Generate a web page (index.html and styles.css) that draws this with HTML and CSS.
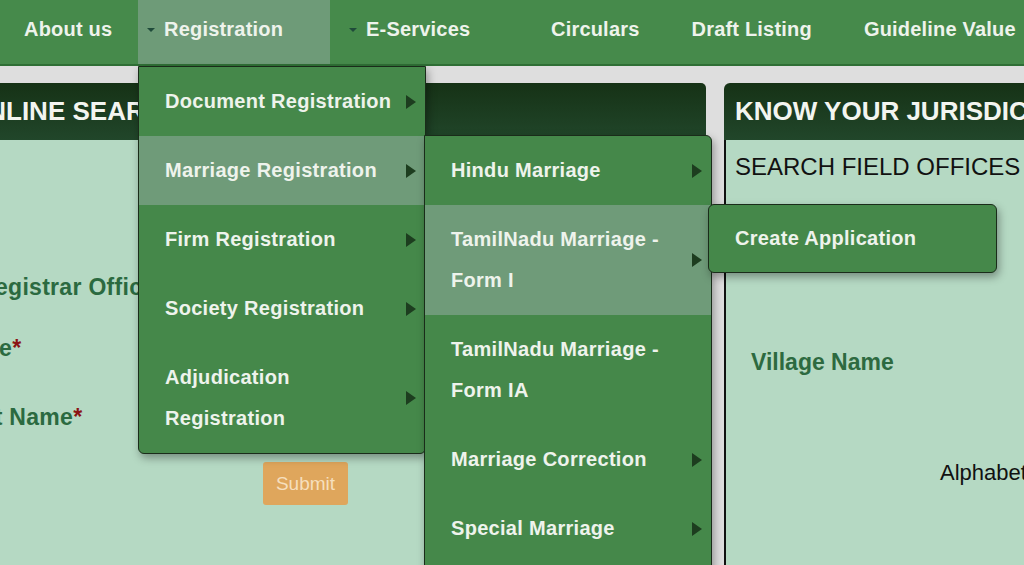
FILE: index.html
```html
<!DOCTYPE html>
<html lang="en">
<head>
<meta charset="utf-8">
<title>Registration</title>
<link rel="stylesheet" href="styles.css">
</head>
<body>
<nav class="nav">
  <ul class="nav-list">
    <li class="nav-item item-about"><span>About us</span></li>
    <li class="nav-item item-reg is-active"><span class="caret"></span><span>Registration</span>
      <ul class="menu menu-1">
        <li class="menu-item">Document Registration<span class="arrow"></span></li>
        <li class="menu-item is-active">Marriage Registration<span class="arrow"></span>
          <ul class="menu menu-2">
            <li class="menu-item">Hindu Marriage<span class="arrow"></span></li>
            <li class="menu-item is-active">TamilNadu Marriage - Form I<span class="arrow"></span>
              <ul class="menu menu-3">
                <li class="menu-item menu-item-single">Create Application</li>
              </ul>
            </li>
            <li class="menu-item">TamilNadu Marriage - Form IA</li>
            <li class="menu-item">Marriage Correction<span class="arrow"></span></li>
            <li class="menu-item">Special Marriage<span class="arrow"></span></li>
          </ul>
        </li>
        <li class="menu-item">Firm Registration<span class="arrow"></span></li>
        <li class="menu-item">Society Registration<span class="arrow"></span></li>
        <li class="menu-item">Adjudication Registration<span class="arrow"></span></li>
      </ul>
    </li>
    <li class="nav-item item-eserv"><span class="caret"></span><span>E-Services</span></li>
    <li class="nav-item"><span>Circulars</span></li>
    <li class="nav-item"><span>Draft Listing</span></li>
    <li class="nav-item"><span>Guideline Value</span></li>
  </ul>
</nav>

<main class="main">
  <section class="panel panel-left">
    <h2 class="panel-head">ONLINE SEARCH</h2>
    <div class="panel-body left-body">
      <div class="field-label">Sub Registrar Office</div>
      <div class="field-label label-2">Volume<span class="req">*</span></div>
      <div class="field-label label-3">District Name<span class="req">*</span></div>
      <button class="submit" type="button">Submit</button>
    </div>
  </section>
  <section class="panel panel-right">
    <h2 class="panel-head">KNOW YOUR JURISDICTION</h2>
    <div class="panel-body right-body">
      <div class="search-title">SEARCH FIELD OFFICES</div>
      <div class="village">Village Name</div>
      <div class="alpha">Alphabetical</div>
    </div>
  </section>
</main>
</body>
</html>
```

FILE: styles.css
```css
* {
  box-sizing: border-box;
  margin: 0;
  padding: 0;
}

html, body {
  width: 1024px;
  height: 565px;
  overflow: hidden;
}

body {
  background: #dedede;
  font-family: "Liberation Sans", Arial, sans-serif;
}

ul {
  list-style: none;
}

/* ---------- top navigation ---------- */
.nav {
  position: relative;
  z-index: 10;
  height: 66px;
  background: #468a4b;
  border-bottom: 2px solid #2f6f35;
}

.nav-list {
  display: flex;
  height: 64px;
}

.nav-item {
  position: relative;
  flex: 0 0 auto;
  display: flex;
  align-items: center;
  height: 64px;
  padding: 0 26px 6px 26px;
  color: #eef3ec;
  font-size: 20px;
  font-weight: bold;
  letter-spacing: 0.2px;
  white-space: nowrap;
}

.item-about {
  width: 138px;
  padding-left: 24px;
  padding-right: 0;
}

.item-reg {
  width: 192px;
  padding-left: 9px;
  padding-right: 0;
}

.item-reg.is-active {
  background: #6e9b78;
}

.item-eserv {
  width: 195px;
  padding-left: 19px;
  padding-right: 0;
}

.caret {
  width: 0;
  height: 0;
  margin-top: 2px;
  margin-right: 9px;
  border-left: 4px solid transparent;
  border-right: 4px solid transparent;
  border-top: 4px solid #1f4b3a;
}

/* ---------- dropdown menus ---------- */
.menu {
  position: absolute;
  width: 288px;
  background: #45884a;
  border: 1px solid #1a2c1a;
  box-shadow: 2px 4px 8px rgba(0, 0, 0, 0.35);
  letter-spacing: 0.3px;
}

.menu-1 {
  top: 66px;
  left: 0;
  border-radius: 0 0 6px 6px;
}

.menu-2 {
  top: -1px;
  left: calc(100% - 1px);
  padding-bottom: 12px;
  border-radius: 0 6px 0 0;
}

.menu-3 {
  top: -1px;
  left: calc(100% - 3px);
  width: 289px;
  border-radius: 6px;
}

.menu-item {
  position: relative;
  padding: 14px 24px 14px 26px;
  line-height: 41px;
  color: #eef3ec;
  font-size: 20px;
  font-weight: bold;
  white-space: normal;
}

.menu-item.is-active {
  background: #6f9b79;
}

.menu-item-single {
  padding-top: 13px;
  padding-bottom: 13px;
}

.menu-3 .menu-item {
  border-radius: 6px;
}

.arrow {
  position: absolute;
  right: 9px;
  top: 50%;
  margin-top: -7px;
  width: 0;
  height: 0;
  border-top: 7px solid transparent;
  border-bottom: 7px solid transparent;
  border-left: 10px solid #1d3d1f;
}

/* ---------- panels ---------- */
.main {
  display: flex;
  gap: 18px;
  margin-top: 17px;
  height: 482px;
}

.panel-left {
  flex: 0 0 786px;
  margin-left: -80px;
}

.panel-right {
  flex: 0 0 330px;
}

.panel-head {
  display: flex;
  align-items: center;
  height: 57px;
  overflow: hidden;
  background: linear-gradient(#163216, #21462a);
  color: #f3f5f0;
  font-size: 26px;
  font-weight: bold;
  white-space: nowrap;
}

.panel-left .panel-head {
  padding-left: 47px;
  border-radius: 0 5px 0 0;
}

.panel-right .panel-head {
  padding-left: 11px;
  border-radius: 6px 0 0 0;
}

.panel-body {
  height: 425px;
  background: #b5d9c3;
}

.left-body {
  padding: 133px 0 0 7px;
}

.field-label {
  color: #2b6a40;
  font-size: 23px;
  font-weight: bold;
  letter-spacing: 0.3px;
  line-height: 28px;
  white-space: nowrap;
}

.label-2 {
  margin-top: 33px;
  margin-left: 2px;
}

.label-3 {
  margin-top: 41px;
  margin-left: -6px;
}

.req {
  color: #8b1414;
}

.submit {
  display: block;
  width: 85px;
  height: 43px;
  margin-top: 31px;
  margin-left: 336px;
  border: none;
  border-radius: 3px;
  background: #dfa65c;
  color: #f6dfbd;
  font-family: "Liberation Sans", Arial, sans-serif;
  font-size: 19px;
}

.right-body {
  padding: 13px 0 0 9px;
  border-left: 2px solid #111;
}

.search-title {
  color: #111;
  font-size: 24px;
  line-height: 28px;
  white-space: nowrap;
}

.village {
  margin-top: 167px;
  padding-left: 16px;
  color: #2d6a40;
  font-size: 23px;
  font-weight: bold;
  line-height: 28px;
  white-space: nowrap;
}

.alpha {
  margin-top: 83px;
  padding-left: 205px;
  color: #111;
  font-size: 22px;
  line-height: 28px;
  white-space: nowrap;
}
```
